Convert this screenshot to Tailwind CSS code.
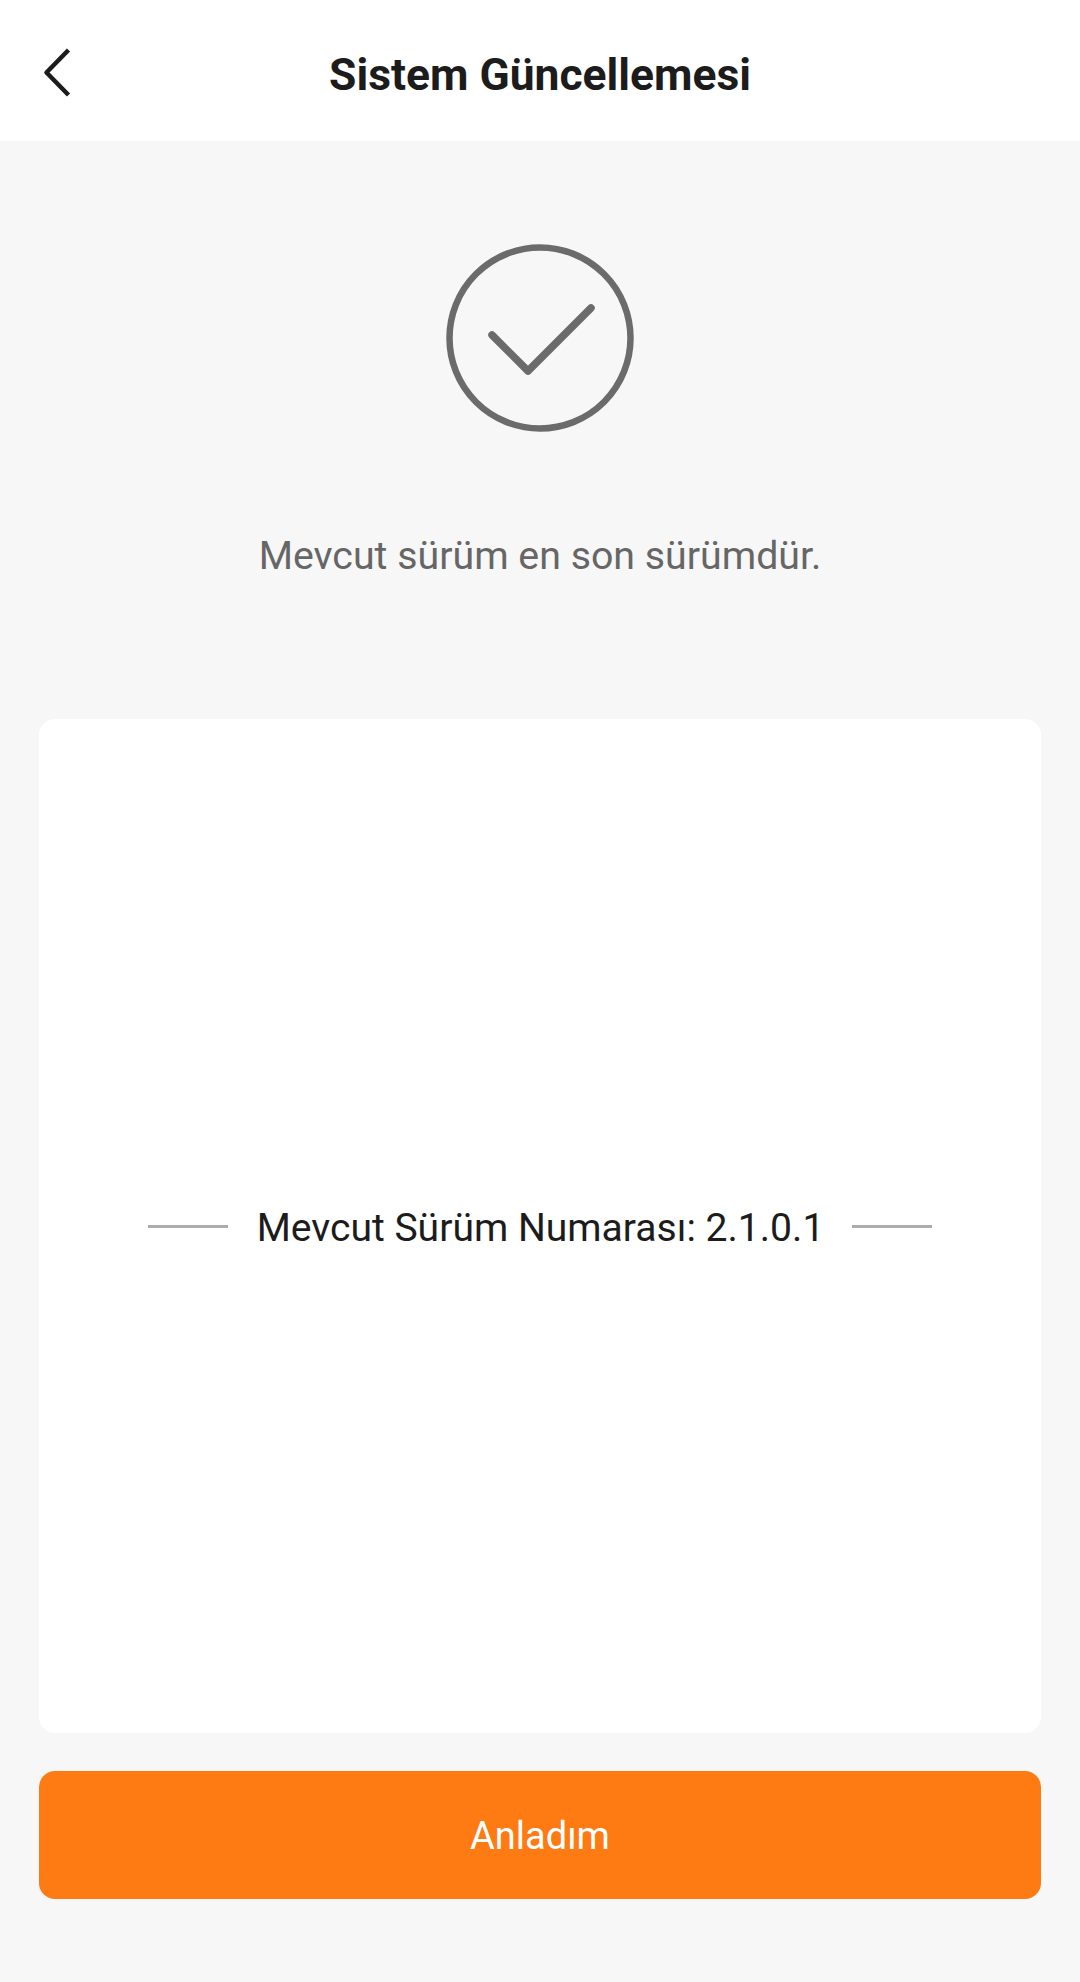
<!DOCTYPE html>
<html lang="tr">
<head>
    <meta charset="UTF-8">
    <meta name="viewport" content="width=device-width, initial-scale=1.0">
    <title>Sistem Güncellemesi</title>
    <script src="https://cdn.jsdelivr.net/npm/@tailwindcss/browser@4"></script>
</head>
<body class="bg-[#f7f7f7] font-['Roboto',sans-serif]">
    <div class="w-[1080px] h-[1982px] flex flex-col overflow-hidden">
        <!-- Header -->
        <div class="relative h-[141px] bg-white flex items-center justify-center">
            <svg class="absolute left-[40px] top-[44px]" width="36" height="58" viewBox="0 0 36 58" fill="none">
                <path d="M28.5 6 L6.5 28.5 L28.5 51" stroke="#1c1c1c" stroke-width="4.5" stroke-linejoin="round"/>
            </svg>
            <h1 class="text-[44.4px] font-bold leading-none text-[#1c1c1c] mt-[10px]">Sistem Güncellemesi</h1>
        </div>

        <!-- Status -->
        <div class="flex flex-col items-center pt-[103px]">
            <svg width="188" height="188" viewBox="0 0 188 188" fill="none">
                <circle cx="94" cy="94" r="90.5" stroke="#6b6b6b" stroke-width="6.5"/>
                <path d="M46 91 L82 127 L145 64" stroke="#6b6b6b" stroke-width="7.5" stroke-linecap="round" stroke-linejoin="round"/>
            </svg>
            <p class="mt-[100px] text-[39.3px] leading-[48px] text-[#666666]">Mevcut sürüm en son sürümdür.</p>
        </div>

        <!-- Version card -->
        <div class="mx-[39px] mt-[139px] h-[1014px] bg-white rounded-[16px] flex items-center justify-center">
            <div class="flex items-center">
                <div class="w-[80px] h-[3px] bg-[#adadad]"></div>
                <span class="ml-[29px] mr-[28px] pt-[3px] text-[39.1px] leading-[48px] text-[#1c1c1c]">Mevcut Sürüm Numarası: 2.1.0.1</span>
                <div class="w-[80px] h-[3px] bg-[#adadad]"></div>
            </div>
        </div>

        <!-- Button -->
        <button class="mx-[39px] mt-[38px] h-[128px] pt-[2px] rounded-[16px] bg-[#fe7a12] text-white text-[38px] leading-none">Anladım</button>
    </div>
</body>
</html>
